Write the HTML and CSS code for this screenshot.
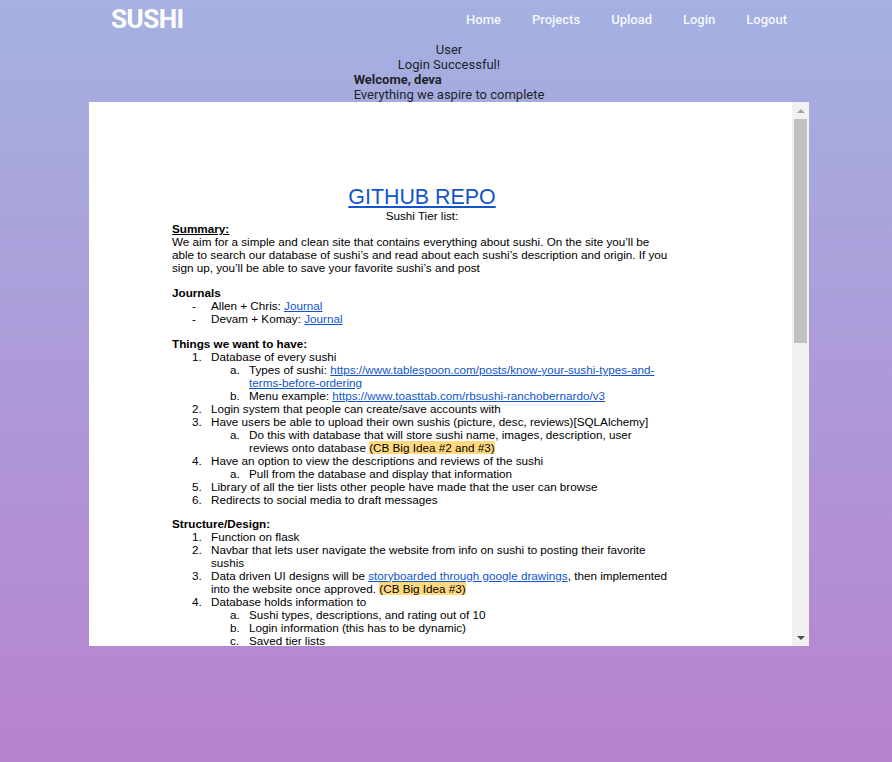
FILE: index.html
```
<!DOCTYPE html>
<html>
<head>
<meta charset="utf-8">
<link rel="stylesheet" href="styles.css">
</head>
<body>
<nav class="nav">
  <a class="brand" href="#">SUSHI</a>
  <ul class="links">
    <li><a href="#">Home</a></li>
    <li><a href="#">Projects</a></li>
    <li><a href="#">Upload</a></li>
    <li><a href="#">Login</a></li>
    <li><a href="#">Logout</a></li>
  </ul>
</nav>
<main class="main">
  <div class="center-line">User</div>
  <div class="center-line">Login Successful!</div>
  <div class="intro">
    <div class="welcome">Welcome, deva</div>
    <div>Everything we aspire to complete</div>
  </div>
  <div class="frame">
    <div class="doc">
      <div class="doc-body">
        <p class="title"><a href="#">GITHUB REPO</a></p>
        <p class="c">Sushi Tier list:</p>
        <p><b><u>Summary:</u></b></p>
        <p>We aim for a simple and clean site that contains everything about sushi. On the site you’ll be able to search our database of sushi’s and read about each sushi’s description and origin. If you sign up, you’ll be able to save your favorite sushi’s and post</p>
        <p class="blank"></p>
        <p><b>Journals</b></p>
        <div class="li l1"><span class="mk">-</span><span>Allen + Chris: <a href="#">Journal</a></span></div>
        <div class="li l1"><span class="mk">-</span><span>Devam + Komay: <a href="#">Journal</a></span></div>
        <p class="blank"></p>
        <p><b>Things we want to have:</b></p>
        <div class="li l1"><span class="mk">1.</span><span>Database of every sushi</span></div>
        <div class="li l2"><span class="mk">a.</span><span>Types of sushi: <a href="#">https://www.tablespoon.com/posts/know-your-sushi-types-and-terms-before-ordering</a></span></div>
        <div class="li l2"><span class="mk">b.</span><span>Menu example: <a href="#">https://www.toasttab.com/rbsushi-ranchobernardo/v3</a></span></div>
        <div class="li l1"><span class="mk">2.</span><span>Login system that people can create/save accounts with</span></div>
        <div class="li l1"><span class="mk">3.</span><span>Have users be able to upload their own sushis (picture, desc, reviews)[SQLAlchemy]</span></div>
        <div class="li l2"><span class="mk">a.</span><span>Do this with database that will store sushi name, images, description, user reviews onto database <mark>(CB Big Idea #2 and #3)</mark></span></div>
        <div class="li l1"><span class="mk">4.</span><span>Have an option to view the descriptions and reviews of the sushi</span></div>
        <div class="li l2"><span class="mk">a.</span><span>Pull from the database and display that information</span></div>
        <div class="li l1"><span class="mk">5.</span><span>Library of all the tier lists other people have made that the user can browse</span></div>
        <div class="li l1"><span class="mk">6.</span><span>Redirects to social media to draft messages</span></div>
        <p class="blank sm"></p>
        <p><b>Structure/Design:</b></p>
        <div class="li l1"><span class="mk">1.</span><span>Function on flask</span></div>
        <div class="li l1"><span class="mk">2.</span><span>Navbar that lets user navigate the website from info on sushi to posting their favorite sushis</span></div>
        <div class="li l1"><span class="mk">3.</span><span>Data driven UI designs will be <a href="#">storyboarded through google drawings</a>, then implemented into the website once approved. <mark>(CB Big Idea #3)</mark></span></div>
        <div class="li l1"><span class="mk">4.</span><span>Database holds information to</span></div>
        <div class="li l2"><span class="mk">a.</span><span>Sushi types, descriptions, and rating out of 10</span></div>
        <div class="li l2"><span class="mk">b.</span><span>Login information (this has to be dynamic)</span></div>
        <div class="li l2"><span class="mk">c.</span><span>Saved tier lists</span></div>
        <div class="li l2"><span class="mk">d.</span><span>User reviews</span></div>
      </div>
    </div>
    <div class="scrollbar">
      <div class="arrow up"></div>
      <div class="track"><div class="thumb"></div></div>
      <div class="arrow down"></div>
    </div>
  </div>
</main>
</body>
</html>
```
FILE: styles.css
```
* { box-sizing: border-box; }
html, body { margin: 0; padding: 0; }
body {
  height: 762px;
  background: linear-gradient(180deg, #a4b1e2 0%, #b783ce 100%);
  font-family: Roboto, "Liberation Sans", sans-serif;
  color: #212529;
  font-size: 13px;
  overflow: hidden;
}
.nav {
  display: flex;
  align-items: center;
  justify-content: space-between;
  padding: 0 89.5px 0 111px;
  height: 38px;
}
.brand {
  color: #fff;
  font-weight: 700;
  font-size: 26px;
  text-decoration: none;
  letter-spacing: -0.5px;
}
.links {
  list-style: none;
  display: flex;
  margin: 0;
  padding: 0;
}
.links a {
  display: block;
  padding: 0 15.5px;
  color: rgba(255,255,255,0.92);
  text-decoration: none;
  font-weight: 500;
  font-size: 13px;
}
.main {
  display: flex;
  flex-direction: column;
  align-items: center;
  padding: 4px 0 0 6px;
  line-height: 15px;
}
.center-line { text-align: center; }
.intro { text-align: left; }
.welcome { font-weight: 700; }
.frame {
  width: 720px;
  height: 544px;
  background: #fff;
  display: flex;
}
.doc {
  flex: 1;
  overflow: hidden;
  font-family: "Liberation Sans", Arial, sans-serif;
  font-size: 11.7px;
  color: #000;
  line-height: 13px;
}
.doc-body {
  width: 500px;
  margin-left: 83px;
  padding-top: 83px;
}
.doc p { margin: 0; }
.doc a { color: #1155cc; text-decoration: underline; }
.doc .title {
  text-align: center;
  font-size: 21.4px;
  line-height: 24px;
}
.doc .c { text-align: center; }
.doc .blank { height: 12px; }
.doc .blank.sm { height: 10.5px; }
.li { display: flex; }
.li.l1 { padding-left: 20px; }
.li.l2 { padding-left: 58px; }
.mk { flex: 0 0 19px; }
mark { background: #ffd97f; color: #000; }
.scrollbar {
  flex: 0 0 17px;
  background: #f1f1f1;
  display: flex;
  flex-direction: column;
}
.arrow {
  height: 17px;
  display: flex;
  align-items: center;
  justify-content: center;
}
.arrow.up::before {
  content: "";
  border-left: 4px solid transparent;
  border-right: 4px solid transparent;
  border-bottom: 4px solid #a3a3a3;
}
.arrow.down::before {
  content: "";
  border-left: 4px solid transparent;
  border-right: 4px solid transparent;
  border-top: 4px solid #505050;
}
.track { flex: 1; padding: 0 2px; }
.thumb { height: 224px; background: #c1c1c1; }
```
